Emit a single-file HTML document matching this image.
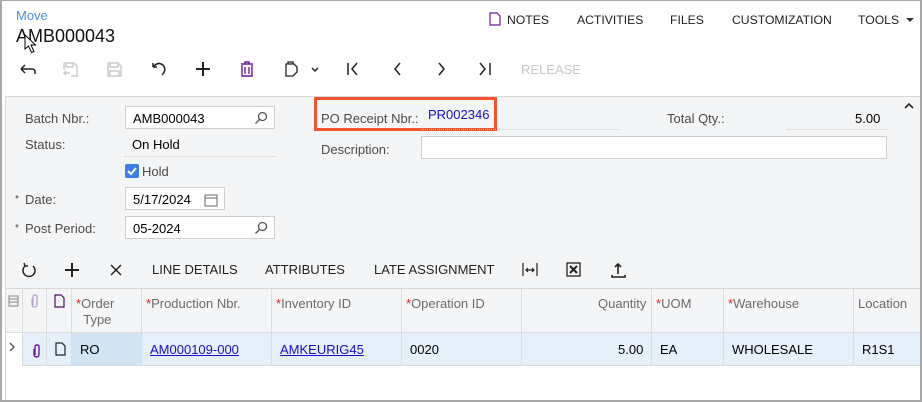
<!DOCTYPE html>
<html><head><meta charset="utf-8"><style>
*{box-sizing:border-box;margin:0;padding:0}
body{width:922px;height:402px;overflow:hidden;background:#fff;font-family:"Liberation Sans",Arial,sans-serif;font-size:13px;color:#000;position:relative}
.a{position:absolute;white-space:nowrap}
.frame{position:absolute;left:0;top:0;width:922px;height:402px;border:1px solid #a8a8a8;border-width:1px 2px 2px 2px}
.lbl{color:#4a4a4a;font-size:13px}
.inp{position:absolute;background:#fff;border:1px solid #cfcfcf;height:23px}
.inp span{position:absolute;left:7px;top:4px;font-size:13px}
.mag{position:absolute;right:6px;top:4px}
.tb{font-size:12.2px;color:#222;top:13px}
.hd{color:#6b6b6b;font-size:13px}
.st{color:#e02020}
.vl{position:absolute;top:289px;height:77px;width:1px;background:#dcdcdc}
a{color:#1a0dcc;text-decoration:underline}
</style></head><body>
<div class="frame"></div>
<div class="a" style="left:16px;top:8px;color:#4a8ed8;font-size:13px">Move</div>
<div class="a" style="left:16px;top:26px;font-size:18px;color:#111">AMB000043</div>
<svg class="a" style="left:24px;top:34px" width="14" height="20" viewBox="0 0 14 20"><path d="M1 1 L1 15 L4.5 12 L7.5 18.5 L10 17.5 L7 11 L11.5 11 Z" fill="#fff" stroke="#000" stroke-width="1"/></svg>

<svg class="a" style="left:489px;top:12px" width="12" height="14" viewBox="0 0 12 14"><path d="M1 1 H8 L11 4 V13 H1 Z" fill="none" stroke="#6a1b9a" stroke-width="1.2"/></svg>
<div class="a tb" style="left:507px">NOTES</div>
<div class="a tb" style="left:577px">ACTIVITIES</div>
<div class="a tb" style="left:670px">FILES</div>
<div class="a tb" style="left:732px">CUSTOMIZATION</div>
<div class="a tb" style="left:858px">TOOLS</div>
<div class="a" style="left:906px;top:18px;border-left:4px solid transparent;border-right:4px solid transparent;border-top:4px solid #333"></div>

<svg class="a" style="left:0;top:58px" width="500" height="24" viewBox="0 0 500 24" fill="none" stroke-width="1.5">
<path d="M21 11 H32 Q35 11 35 14 V16 M21 11 L25 7 M21 11 L25 15" stroke="#222"/>
<path d="M64 5 H74 L77 8 V18 H71 M64 5 V12 M66 5 V9 H73 V5 M70 15 H64 M66 13 L64 15 L66 17" stroke="#ccc"/>
<path d="M108 5 H118 L121 8 V18 H108 Z M110 5 V9 H118 V5 M110 18 V13 H119 V18" stroke="#ccc"/>
<path d="M153 9 Q158 3 163 7 Q167 12 162 17 M153 9 V5 M153 9 H157" stroke="#222"/>
<path d="M196 11 H210 M203 4 V18" stroke="#222" stroke-width="2"/>
<path d="M241 6 H253 M245 6 V4 H249 V6 M242 7 V18 H252 V7 M245 9 V16 M249 9 V16" stroke="#6a1b9a" stroke-width="1.4"/>
<path d="M286 6 H294 L297 9 V14 L293 18 H286 Z M288 6 V4 H293 V6" stroke="#222" stroke-width="1.3"/>
<path d="M312 10 L315 13 L318 10" stroke="#222"/>
<path d="M348 5 V17 M357 5 L352 11 L357 17" stroke="#222"/>
<path d="M400 5 L395 11 L400 17" stroke="#222"/>
<path d="M439 5 L444 11 L439 17" stroke="#222"/>
<path d="M480 5 L485 11 L480 17 M490 5 V17" stroke="#222"/>
</svg>
<div class="a" style="left:521px;top:62px;color:#c8c8c8;font-size:13px">RELEASE</div>

<div class="a" style="left:5px;top:96px;width:915px;height:193px;background:#f4f5f7;border-top:1px solid #d8d8d8;border-left:1px solid #d8d8d8"></div>
<svg class="a" style="left:903px;top:102px" width="12" height="8" viewBox="0 0 12 8"><path d="M2 6 L6 2 L10 6" fill="none" stroke="#222" stroke-width="1.6"/></svg>
<div class="a lbl" style="left:25px;top:111px">Batch Nbr.:</div>
<div class="inp" style="left:125px;top:106px;width:150px"><span>AMB000043</span><svg class="mag" width="14" height="14" viewBox="0 0 14 14" fill="none" stroke="#555" stroke-width="1.3"><circle cx="8.5" cy="5.5" r="4"/><path d="M5.5 8.5 L1.5 12.5"/></svg></div>
<div class="a lbl" style="left:25px;top:137px">Status:</div>
<div class="a" style="left:132px;top:137px">On Hold</div>
<div class="a" style="left:125px;top:156px;width:150px;border-top:1px dotted #ccc"></div>
<div class="a" style="left:125px;top:164px;width:14px;height:14px;background:#3c7ee6;border-radius:2px"><svg width="14" height="14" viewBox="0 0 14 14"><path d="M3 7 L6 10 L11 4" fill="none" stroke="#fff" stroke-width="2"/></svg></div>
<div class="a lbl" style="left:142px;top:164px">Hold</div>
<div class="a" style="left:15px;top:194px;font-size:10px;color:#444">*</div>
<div class="a lbl" style="left:25px;top:192px">Date:</div>
<div class="inp" style="left:125px;top:187px;width:100px"><span>5/17/2024</span><svg class="mag" style="top:5px" width="14" height="14" viewBox="0 0 14 14" fill="none" stroke="#777" stroke-width="1.1"><rect x="1" y="2" width="12" height="11"/><path d="M1 5 H13"/></svg></div>
<div class="a" style="left:15px;top:223px;font-size:10px;color:#444">*</div>
<div class="a lbl" style="left:25px;top:221px">Post Period:</div>
<div class="inp" style="left:125px;top:216px;width:150px"><span>05-2024</span><svg class="mag" width="14" height="14" viewBox="0 0 14 14" fill="none" stroke="#555" stroke-width="1.3"><circle cx="8.5" cy="5.5" r="4"/><path d="M5.5 8.5 L1.5 12.5"/></svg></div>

<div class="a" style="left:314px;top:97px;width:183px;height:34px;border:3px solid #f0552e"></div>
<div class="a lbl" style="left:321px;top:111px">PO Receipt Nbr.:</div>
<div class="a" style="left:428px;top:107px;color:#1a0dcc">PR002346</div>
<div class="a" style="left:421px;top:129px;width:199px;border-top:1px dotted #ccc"></div>
<div class="a lbl" style="left:321px;top:142px">Description:</div>
<div class="inp" style="left:421px;top:136px;width:466px"></div>
<div class="a lbl" style="left:667px;top:111px">Total Qty.:</div>
<div class="a" style="left:855px;top:111px">5.00</div>
<div class="a" style="left:787px;top:129px;width:100px;border-top:1px dotted #ccc"></div>

<svg class="a" style="left:0;top:258px" width="640" height="24" viewBox="0 0 640 24" fill="none" stroke="#222" stroke-width="1.5">
<path d="M33 8 A6 6 0 1 1 25 8 M24 5 L25 8 L28 8"/>
<path d="M65 12 H79 M72 5 V19" stroke-width="2"/>
<path d="M111 7 L121 17 M121 7 L111 17"/>
<path d="M523 5 V18 M537 5 V18 M526 12 H534 M528 10 L526 12 L528 14 M532 10 L534 12 L532 14" stroke-width="1.2"/>
<rect x="567" y="5" width="13" height="13" stroke-width="1.3"/><path d="M570 8 L577 15 M577 8 L570 15" stroke-width="2"/>
<path d="M612 17 V19 H625 V17 M618 16 V7 M615 9 L618 6 L621 9" stroke-width="1.6"/>
</svg>
<div class="a tb" style="left:152px;top:262px;font-size:13px">LINE DETAILS</div>
<div class="a tb" style="left:265px;top:262px;font-size:13px">ATTRIBUTES</div>
<div class="a tb" style="left:374px;top:262px;font-size:13px">LATE ASSIGNMENT</div>

<div class="a" style="left:5px;top:288px;width:915px;height:45px;background:#f4f5f7;border-top:1px solid #d8d8d8;border-bottom:1px solid #dcdcdc"></div>
<div class="a" style="left:22px;top:333px;width:898px;height:33px;background:#e6f0fa;border-bottom:1px solid #d8d8d8"></div>
<div class="a" style="left:71px;top:333px;width:70px;height:32px;background:#d2e4f4"></div>
<div class="a" style="left:5px;top:288px;width:1px;height:112px;background:#d8d8d8"></div>
<div class="vl" style="left:22px"></div><div class="vl" style="left:46px"></div><div class="vl" style="left:71px"></div><div class="vl" style="left:141px"></div><div class="vl" style="left:271px"></div><div class="vl" style="left:401px"></div><div class="vl" style="left:521px"></div><div class="vl" style="left:651px"></div><div class="vl" style="left:723px"></div><div class="vl" style="left:853px"></div>
<svg class="a" style="left:0;top:290px" width="80" height="70" viewBox="0 0 80 70" fill="none" stroke-width="1.2">
<rect x="9" y="6" width="9" height="10" stroke="#999"/><path d="M9 9 H18 M9 12 H18" stroke="#999"/>
<path d="M33 15 V7 Q33 5 35 5 Q37 5 37 7 V14 Q37 17 34.5 17 Q32 17 32 14 V9" stroke="#b59ed0"/>
<path d="M55 5 H61 L64 8 V17 H55 Z" stroke="#4a1060"/>
<path d="M10 53 L14 57 L10 61" stroke="#555" stroke-width="1.4"/>
<path d="M35 65 V57 Q35 55 37 55 Q39 55 39 57 V64 Q39 67 36.5 67 Q34 67 34 64 V59" stroke="#6a1b9a" stroke-width="1.4"/>
<path d="M56 53 H62 L65 56 V65 H56 Z" stroke="#222"/>
</svg>
<div class="a hd" style="left:76px;top:296px;line-height:16px"><span class="st">*</span>Order<br>&nbsp;&nbsp;Type</div>
<div class="a hd" style="left:146px;top:296px"><span class="st">*</span>Production Nbr.</div>
<div class="a hd" style="left:276px;top:296px"><span class="st">*</span>Inventory ID</div>
<div class="a hd" style="left:406px;top:296px"><span class="st">*</span>Operation ID</div>
<div class="a hd" style="left:598px;top:296px">Quantity</div>
<div class="a hd" style="left:656px;top:296px"><span class="st">*</span>UOM</div>
<div class="a hd" style="left:728px;top:296px"><span class="st">*</span>Warehouse</div>
<div class="a hd" style="left:858px;top:296px">Location</div>

<div class="a" style="left:80px;top:342px">RO</div>
<div class="a" style="left:150px;top:342px"><a>AM000109-000</a></div>
<div class="a" style="left:280px;top:342px"><a>AMKEURIG45</a></div>
<div class="a" style="left:410px;top:342px">0020</div>
<div class="a" style="left:618px;top:342px">5.00</div>
<div class="a" style="left:660px;top:342px">EA</div>
<div class="a" style="left:732px;top:342px">WHOLESALE</div>
<div class="a" style="left:862px;top:342px">R1S1</div>
</body></html>
